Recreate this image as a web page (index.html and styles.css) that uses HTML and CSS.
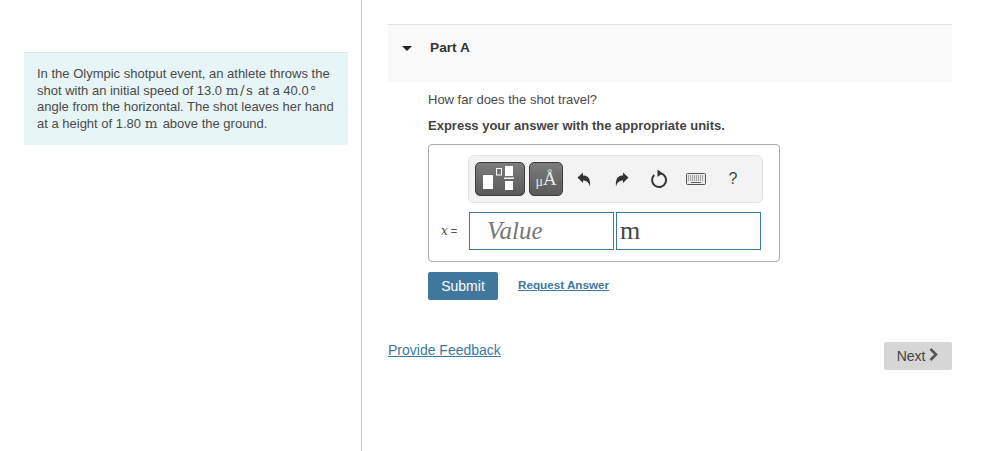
FILE: index.html
```html
<!DOCTYPE html>
<html lang="en">
  <head>
    <meta charset="UTF-8" />
    <meta name="viewport" content="width=device-width, initial-scale=1.0" />
    <title>Part A</title>
    <link rel="stylesheet" href="styles.css">
  </head>
  <body>
    <div class="page">
      <!-- Problem statement -->
      <div class="left">
        <div class="intro">
          In the Olympic shotput event, an athlete throws the shot with an initial speed of 13.0 <span class="math">m/s</span> at a 40.0<span class="deg">∘</span> angle from the horizontal. The shot leaves her hand at a height of 1.80 <span class="math">m</span> above the ground.
        </div>
      </div>

      <!-- Question -->
      <div class="right">
        <div class="part-head">
          <span class="caret"></span>
          <span class="part-title">Part A</span>
        </div>
        <div class="question">
          <p class="ask">How far does the shot travel?</p>
          <p class="express">Express your answer with the appropriate units.</p>

          <div class="answer-box">
            <div class="toolbar">
              <button class="tool-btn templates" aria-label="Templates">
                <svg width="46" height="30" viewBox="0 0 46 30">
                  <rect x="6" y="11" width="10" height="14" fill="#fff" />
                  <rect x="19.500" y="4.500" width="5" height="6.500" fill="none" stroke="#fff" />
                  <rect x="28" y="2" width="8" height="10" fill="#fff" />
                  <rect x="27" y="13.500" width="10" height="1.400" fill="#fff" />
                  <rect x="28" y="17" width="8" height="9" fill="#fff" />
                </svg>
              </button>
              <button class="tool-btn units" aria-label="Units"><span class="mu">μ</span><span class="ang">Å</span></button>
              <button class="tool-icon first" aria-label="Undo">
                <svg width="14" height="15" viewBox="0 0 14 15"><path d="M0.500 5.500 6 0.500V3.500C10.500 3.500 13.800 6 13 14.500 12 11 10 8.500 6 8.500V11Z" fill="#333" /></svg>
              </button>
              <button class="tool-icon second" aria-label="Redo">
                <svg width="14" height="15" viewBox="0 0 14 15"><path d="M13.500 5.500 8 0.500V3.500C3.500 3.500 0.200 6 1 14.500 2 11 4 8.500 8 8.500V11Z" fill="#333" /></svg>
              </button>
              <button class="tool-icon" aria-label="Reset">
                <svg width="18" height="20" viewBox="0 0 18 20"><path d="M10.500 4.200A7 7 0 1 1 4.200 6" fill="none" stroke="#333" stroke-width="2" /><path d="M7.500 0.500 12.500 4.200 7.500 8Z" fill="#333" /></svg>
              </button>
              <button class="tool-icon" aria-label="Keyboard">
                <svg width="20" height="12" viewBox="0 0 20 12">
                  <rect x="0.500" y="0.500" width="19" height="11" rx="1" fill="#e8e8e8" stroke="#555" />
                  <path d="M2 3H18M2 5H18M2 7H18" stroke="#666" stroke-dasharray="1 1" />
                  <path d="M5 9.500H15" stroke="#666" />
                </svg>
              </button>
              <button class="tool-icon help" aria-label="Help">?</button>
            </div>
            <div class="answer-row">
              <span class="label"><i class="var">x</i> =</span>
              <div class="field value">Value</div>
              <div class="field unit">m</div>
            </div>
          </div>

          <div class="actions">
            <button class="submit">Submit</button>
            <a class="request" href="#">Request Answer</a>
          </div>
        </div>

        <div class="bottom">
          <a class="feedback" href="#">Provide Feedback</a>
          <button class="next">Next <svg width="10" height="13" viewBox="0 0 10 13"><path d="M1.500 1 7 6.500 1.500 12" fill="none" stroke="#555" stroke-width="2.600" /></svg></button>
        </div>
      </div>
    </div>
  </body>
</html>
```

FILE: styles.css
```css
html,
body {
  margin: 0;
  height: 100%;
  overflow: hidden;
}
body {
  font-family: "Liberation Sans", Arial, sans-serif;
  font-size: 13px;
  color: #4a4a4a;
  background: #fff;
}
.page {
  display: flex;
  height: 451px;
}
.left {
  box-sizing: border-box;
  border-right: 1px solid #ccc;
  width: 362px;
  padding: 52px 13px 0 24px;
}
.intro {
  background: #e8f5f6;
  border-top: 1px solid #dfe6e6;
  padding: 13px 13px 0;
  height: 93px;
  box-sizing: border-box;
  font-size: 13px;
  line-height: 16.7px;
  color: #4a4a4a;
}
.math {
  font-family: "DejaVu Serif", serif;
  font-size: 13.5px;
  letter-spacing: 1.5px;
  line-height: 0;
}
.deg {
  font-family: "Liberation Serif", serif;
  font-size: 13px;
  vertical-align: 4px;
  line-height: 0;
}
.right {
  flex: 1;
  padding: 24px 32px 0 26px;
  display: flex;
  flex-direction: column;
}
.part-head {
  display: flex;
  align-items: flex-start;
  height: 58px;
  box-sizing: border-box;
  border-top: 1px solid #e4e4e4;
  background: #f9f9f9;
  padding: 15px 0 0 14px;
}
.caret {
  width: 0;
  height: 0;
  margin-top: 6px;
  border-left: 5px solid transparent;
  border-right: 5px solid transparent;
  border-top: 5px solid #222;
}
.part-title {
  margin-left: 18px;
  font-size: 13.7px;
  line-height: 16px;
  font-weight: bold;
  color: #333;
}
.question {
  padding-left: 40px;
}
.ask {
  margin: 11px 0 0;
  line-height: 14px;
}
.express {
  margin: 12px 0 0;
  line-height: 14px;
  font-weight: bold;
  color: #444;
}
.answer-box {
  width: 352px;
  height: 118px;
  box-sizing: border-box;
  margin-top: 11px;
  border: 1px solid #aaa;
  border-radius: 4px;
  padding: 10px 16px 0 0;
}
.toolbar {
  display: flex;
  align-items: center;
  margin-left: 39px;
  height: 48px;
  box-sizing: border-box;
  background: #f3f3f3;
  border: 1px solid #e3e3e3;
  border-radius: 6px;
  padding: 0 0 0 6px;
}
.tool-btn {
  height: 34px;
  padding: 0;
  margin-right: 4px;
  display: flex;
  align-items: center;
  justify-content: center;
  border: 1px solid #3c3c3c;
  border-radius: 5px;
  background: linear-gradient(#7c7c7c, #5a5a5a);
}
.templates {
  width: 50px;
}
.units {
  width: 34px;
  color: #e6e6e6;
  font-family: "Liberation Serif", serif;
  font-size: 19px;
}
.mu {
  font-size: 14px;
  margin-top: 5px;
}
.tool-icon {
  width: 16px;
  padding: 0;
  border: none;
  background: none;
  display: flex;
  justify-content: center;
  align-items: center;
  margin-left: 21px;
  color: #444;
}
.tool-icon svg {
  flex: none;
}
.tool-icon.first {
  margin-left: 9px;
}
.tool-icon.second {
  margin-left: 22px;
}
.help {
  font-size: 16px;
}
.answer-row {
  display: flex;
  align-items: center;
  margin-top: 9px;
}
.label {
  width: 40px;
  box-sizing: border-box;
  padding-left: 12px;
  font-size: 11px;
}
.var {
  font-family: "DejaVu Serif", serif;
  font-size: 12px;
}
.field {
  height: 38px;
  box-sizing: border-box;
  border: 1px solid #3b7a9e;
  font-family: "Liberation Serif", serif;
  line-height: 36px;
}
.value {
  width: 145px;
  margin-right: 2px;
  padding-left: 17px;
  font-size: 25px;
  font-style: italic;
  color: #777;
}
.unit {
  width: 145px;
  padding-left: 3px;
  font-size: 26px;
  color: #444;
}
.actions {
  display: flex;
  align-items: center;
  margin-top: 10px;
}
.submit {
  width: 70px;
  height: 28px;
  padding: 0;
  border: none;
  border-radius: 2px;
  background: #40789c;
  color: #fff;
  font-family: inherit;
  font-size: 14px;
}
.request {
  margin-left: 20px;
  margin-bottom: 4px;
  color: #40789c;
  font-weight: bold;
  font-size: 11.7px;
}
.bottom {
  display: flex;
  justify-content: space-between;
  align-items: flex-start;
  margin-top: 42px;
}
.feedback {
  color: #40789c;
  font-size: 14px;
}
.next {
  width: 68px;
  height: 28px;
  padding: 0;
  border: none;
  border-radius: 2px;
  background: #d6d6d6;
  color: #444;
  font-family: inherit;
  font-size: 14px;
}
```
